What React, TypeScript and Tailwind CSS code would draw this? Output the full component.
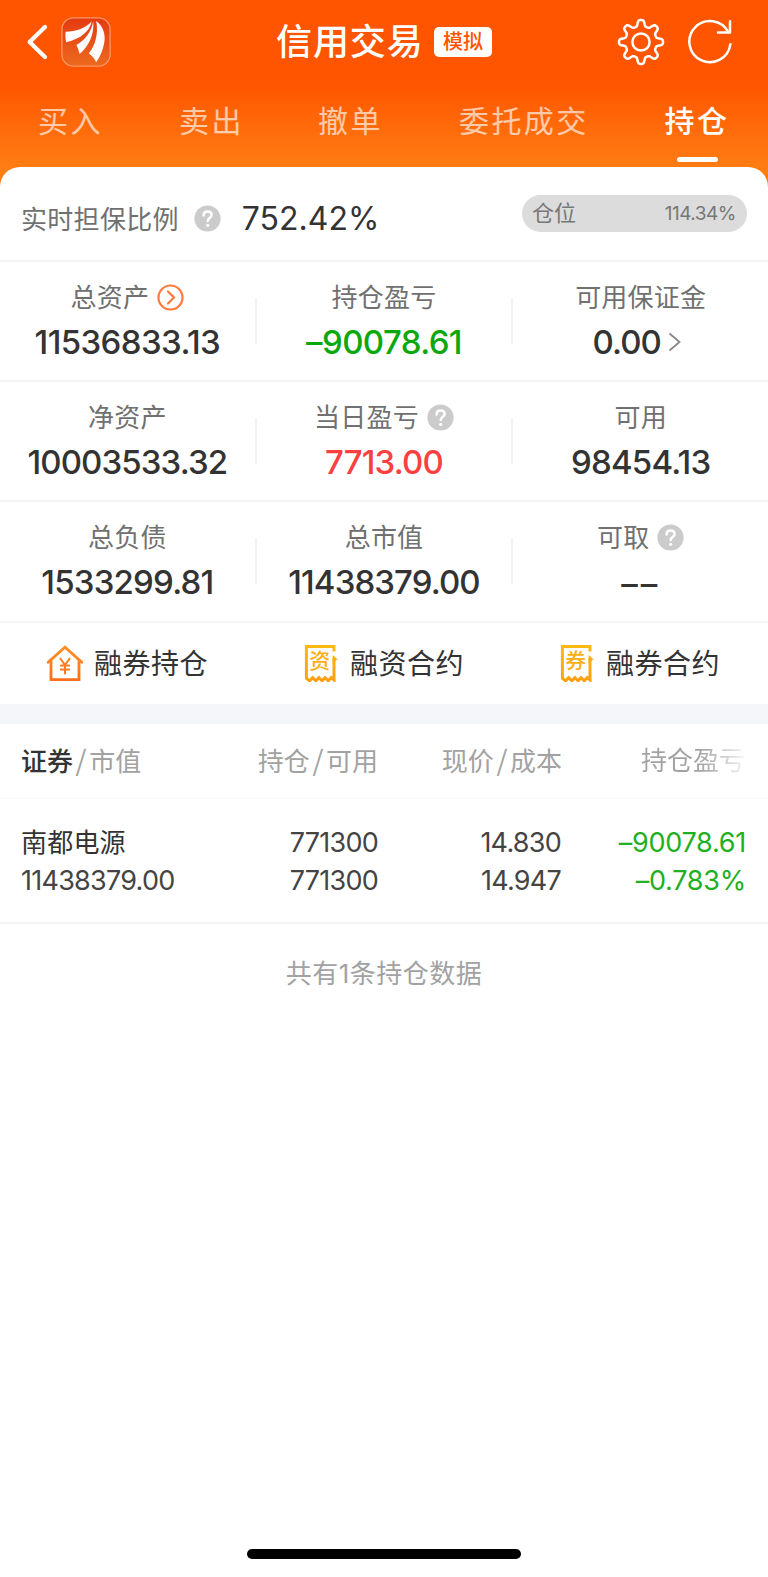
import React from "react";

function Help() {
  return (
    <svg className="size-[27px] shrink-0" viewBox="0 0 27 27" fill="none">
      <circle cx="13.5" cy="13.5" r="13.1" fill="#cbcbcb" />
      <path d="M9.6 10.4c0-2.4 1.7-3.9 4-3.9s4 1.4 4 3.5c0 3-3.9 3-3.9 6" stroke="#fff" strokeWidth="2.5" strokeLinecap="round" />
      <circle cx="13.7" cy="20.3" r="1.6" fill="#fff" />
    </svg>
  );
}

function Gear() {
  const teeth = 8;
  let d = "";
  for (let i = 0; i < teeth * 24; i++) {
    const a = (i / (teeth * 24)) * Math.PI * 2;
    const c = Math.cos(a * teeth) - 0.12;
    const r = 19 + (3.1 * Math.tanh(c * 1.9)) / Math.tanh(1.9);
    d += `${i ? "L" : "M"}${(24 + r * Math.cos(a)).toFixed(2)} ${(24 + r * Math.sin(a)).toFixed(2)}`;
  }
  return (
    <svg className="size-12" viewBox="0 0 48 48" fill="none" stroke="#fff" strokeWidth="2.5" strokeLinejoin="round">
      <path d={d + "Z"} />
      <circle cx="24" cy="24" r="8.6" />
    </svg>
  );
}

function Refresh() {
  return (
    <svg className="size-12" viewBox="0 0 48 48" fill="none" stroke="#fff" strokeWidth="2.5" strokeLinecap="round" strokeLinejoin="round">
      <path d="M44.4 26.2A20.6 20.6 0 1 1 42.2 14" />
      <path d="M44 3.2V14.4H32" />
    </svg>
  );
}

function Logo() {
  return (
    <svg className="h-[50px] w-[50px]" viewBox="0 0 50 50">
      <defs>
        <linearGradient id="logo" x1="0" y1="0" x2="0" y2="1">
          <stop offset="0" stopColor="#e53a12" />
          <stop offset="1" stopColor="#ec6a1e" />
        </linearGradient>
      </defs>
      <rect x="0.9" y="0.9" width="48.2" height="48.2" rx="11.5" fill="url(#logo)" stroke="#ff9565" strokeWidth="1.3" />
      <path d="M4.6 14.8C15 14.2 24 11.5 30.6 4.4C29 14 20 21.5 5.2 25.2C4.4 22 4.2 18 4.6 14.8Z" fill="#fff" />
      <path d="M32.2 4.2C33.6 18 27.6 29 18.6 37C17.6 33 16.6 30 15.4 28C24 23 30.4 15 32.2 4.2Z" fill="#fff" />
      <path d="M35.2 4C42 9 44.8 17 43.3 25.6C42 33 39 40 35.2 45.2C33.4 41.6 31 38.8 27.8 36.6C34.6 28 37.6 16 35.2 4Z" fill="#fff" />
    </svg>
  );
}

function House() {
  return (
    <svg className="-mt-px h-[38px] w-[38px]" viewBox="0 0 38 38" fill="none" strokeWidth="2.8" strokeLinecap="round" strokeLinejoin="miter">
      <defs>
        <linearGradient id="house" x1="0" y1="0" x2="0" y2="38" gradientUnits="userSpaceOnUse">
          <stop offset="0" stopColor="#ff9428" />
          <stop offset="1" stopColor="#ff6c18" />
        </linearGradient>
      </defs>
      <g stroke="url(#house)">
        <path d="M2.2 18.2L19 3.2L35.8 18.2" />
        <path d="M5 17V35.6H33V17" />
        <path d="M14.4 14.6L19 21L23.6 14.6M19 21V29.4M14.8 21.4H23.2M14.8 25.4H23.2" strokeWidth="2" />
      </g>
    </svg>
  );
}

function Ticket({ char }: { char: string }) {
  return (
    <span className="relative -mt-[2px] block h-[38px] w-[34px]">
      <svg className="h-[38px] w-[34px]" viewBox="0 0 34 38" fill="none">
        <defs>
          <linearGradient id="ticket" x1="0" y1="0" x2="0" y2="38" gradientUnits="userSpaceOnUse">
            <stop offset="0" stopColor="#ffba10" />
            <stop offset="1" stopColor="#ff9e10" />
          </linearGradient>
        </defs>
        <path d="M30 7.5V2.4H2.4V34.2L5.6 36.8L8.7 33.6L11.8 36.8L14.9 33.6L18 36.8L21.1 33.6L24.2 36.8L27.3 33.6L30 36V14" stroke="url(#ticket)" strokeWidth="3" />
        <path d="M28.6 11L33.4 15.2L28.6 19.4Z" fill="#ffac10" />
      </svg>
      <span className="absolute left-[5px] top-[5px] w-[22px] text-center text-[21px] font-medium leading-[24px] text-[#ffae12]">{char}</span>
    </span>
  );
}

type CellProps = { label: string; value: string; tone?: string; tail?: React.ReactNode; after?: React.ReactNode };

function Cell({ label, value, tone = "tracking-[-0.8px] text-[#333]", tail, after }: CellProps) {
  return (
    <div className="flex h-full flex-col items-center pt-[17px]">
      <div className="flex h-9 items-center gap-2 text-[26px] tracking-[0.2px] text-[#707070]">
        <span className="pt-px">{label}</span>
        {tail}
      </div>
      <div className={`mt-[9px] flex h-9 items-center gap-[7px] text-[33px] font-medium ${tone}`}>
        <span>{value}</span>
        {after}
      </div>
    </div>
  );
}

function Row({ children }: { children: React.ReactNode }) {
  const cells = React.Children.toArray(children);
  return (
    <section className="flex h-[120.2px] border-t-2 border-[#f5f5f5]">
      {cells.map((c, i) => (
        <React.Fragment key={i}>
          {i > 0 && <div className="mt-[36px] h-[46px] w-[2px] shrink-0 bg-[#f4f4f4]" />}
          <div className="min-w-0 flex-1">{c}</div>
        </React.Fragment>
      ))}
    </section>
  );
}

const Slash = () => <span className="px-[2.6px] font-['Noto_Sans_CJK_SC',sans-serif] text-[28px] leading-none">/</span>;

export default function App() {
  return (
    <div className="flex h-[1577px] w-[768px] flex-col overflow-hidden bg-white font-[Inter,'Noto_Sans_CJK_SC',sans-serif] leading-none whitespace-nowrap">
      <div className="h-[190px] shrink-0 bg-linear-to-b from-[#ff5500] from-45% to-[#ff7e14] to-90%">
        <header className="flex h-[84px] items-center">
          <svg className="ml-[25px] mr-[11px] h-[40px] w-[25px]" viewBox="0 0 25 40" fill="none" stroke="#fff" strokeWidth="4.2" strokeLinecap="round" strokeLinejoin="round">
            <path d="M20 5L4.6 20L20 35" />
          </svg>
          <Logo />
          <h1 className="ml-[165px] w-[158px] text-[36px] font-medium tracking-[0.9px] text-white">信用交易</h1>
          <span className="flex h-[30px] w-[58px] items-center justify-center rounded-[5px] bg-white text-[20px] font-medium text-[#ff5500]">模拟</span>
          <div className="ml-[125px]"><Gear /></div>
          <div className="ml-[21px]"><Refresh /></div>
        </header>
        <nav className="flex h-[82px] pt-[19px] text-[30px] leading-[36px] tracking-[2.4px] text-white/65">
          <span className="ml-[38px] w-[141px]">买入</span>
          <span className="w-[139px]">卖出</span>
          <span className="w-[141px]">撤单</span>
          <span className="w-[206px]">委托成交</span>
          <span className="flex w-[64px] flex-col items-center font-medium text-white">
            持仓
            <i className="mt-[18px] h-[5px] w-[41px] rounded-full bg-white" />
          </span>
        </nav>
      </div>

      <main className="-mt-[23px] flex flex-1 flex-col rounded-t-[20px] bg-white">
        <section className="flex h-[93px] shrink-0 items-center pl-[21px] pr-[21px]">
          <span className="mt-[12px] text-[26px] tracking-[0.3px] text-[#707070]">实时担保比例</span>
          <div className="ml-[15px] mt-[10px]"><Help /></div>
          <span className="ml-[21px] mt-[11px] text-[32px] text-[#333]">752.42%</span>
          <div className="ml-auto flex h-[37px] w-[225px] items-center justify-between rounded-full bg-[#dcdcdc] pl-[10px] pr-[11px] text-[#777]">
            <span className="-mt-[2px] text-[22px]">仓位</span>
            <span className="text-[19px] tracking-[-0.5px]">114.34%</span>
          </div>
        </section>

        <Row>
          <Cell
            label="总资产"
            value="11536833.13"
            tone="tracking-[-0.6px] text-[#333]"
            tail={
              <svg className="size-[27px]" viewBox="0 0 27 27" fill="none" stroke="#ff7a3c" strokeWidth="2.2" strokeLinecap="round">
                <circle cx="13.5" cy="13.5" r="12" />
                <path d="M11 7.5L17 13.5L11 19.5" />
              </svg>
            }
          />
          <Cell label="持仓盈亏" value="–90078.61" tone="tracking-[-0.6px] text-[#0ba80b]" />
          <Cell
            label="可用保证金"
            value="0.00"
            tone="pr-[8px] tracking-[-0.9px] text-[#333]"
            after={
              <svg className="h-[20px] w-[13px]" viewBox="0 0 13 20" fill="none" stroke="#888" strokeWidth="1.8">
                <path d="M1.5 1.5L11.5 10L1.5 18.5" />
              </svg>
            }
          />
        </Row>
        <Row>
          <Cell label="净资产" value="10003533.32" tone="tracking-[-0.9px] text-[#333]" />
          <Cell label="当日盈亏" value="7713.00" tone="tracking-[-0.85px] text-[#fc4040]" tail={<Help />} />
          <Cell label="可用" value="98454.13" />
        </Row>
        <Row>
          <Cell label="总负债" value="1533299.81" />
          <Cell label="总市值" value="11438379.00" tone="tracking-[-0.9px] text-[#333]" />
          <Cell label="可取" value="––" tone="pt-[4px] tracking-[3px] text-[#333]" tail={<Help />} />
        </Row>

        <section className="flex h-[83.4px] shrink-0 items-center border-t-2 border-[#f5f5f5] pt-px text-[28px] tracking-[0.5px] text-[#333]">
          <div className="flex w-[256px] items-center gap-[10px] pl-[46px]"><House />融券持仓</div>
          <div className="flex w-[256px] items-center gap-[12px] pl-[48px]"><Ticket char="资" />融资合约</div>
          <div className="flex w-[256px] items-center gap-[12px] pl-[48px]"><Ticket char="券" />融券合约</div>
        </section>
        <div className="h-[20px] shrink-0 bg-[#f5f6fa]" />

        <section className="flex h-[75px] shrink-0 items-center border-b-2 border-[#fafafa] pl-[21px] text-[26px] text-[#a2a2a2]">
          <span className="w-[180px]"><span className="font-medium text-[#333]">证券</span><Slash />市值</span>
          <span className="w-[177px] text-right">持仓<Slash />可用</span>
          <span className="w-[184px] text-right">现价<Slash />成本</span>
          <span className="ml-[79px] w-[106px] bg-linear-to-r from-[#a2a2a2] from-55% to-[#f4f4f4] to-98% bg-clip-text pt-px text-transparent">持仓盈亏</span>
        </section>

        <section className="flex h-[125px] shrink-0 border-b-2 border-[#f5f5f5] pl-[21px] pt-[25px] text-[27px] leading-[38px] tracking-[-0.75px] text-[#444]">
          <div className="w-[180px]"><div className="text-[26px] tracking-[0.2px] text-[#333]">南都电源</div><div>11438379.00</div></div>
          <div className="w-[177px] text-right"><div>771300</div><div>771300</div></div>
          <div className="w-[183px] text-right"><div>14.830</div><div>14.947</div></div>
          <div className="w-[185px] text-right tracking-[-0.25px] text-[#20b020]"><div>–90078.61</div><div>–0.783%</div></div>
        </section>

        <p className="mt-[32px] text-center text-[26px] leading-[36px] tracking-[0.5px] text-[#a2a2a2]">共有1条持仓数据</p>
        <div className="mx-auto mb-[18px] mt-auto h-[10px] w-[274px] shrink-0 rounded-full bg-black" />
      </main>
    </div>
  );
}
